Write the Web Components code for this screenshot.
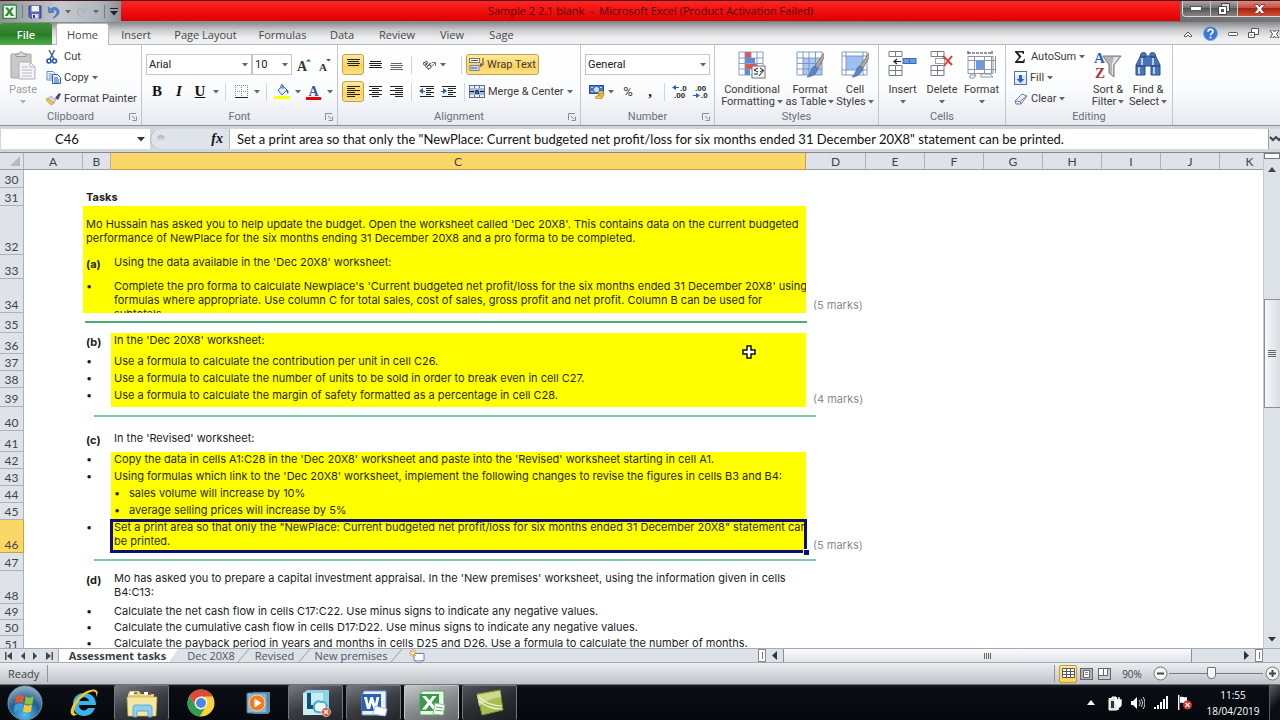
<!DOCTYPE html>
<html lang="en">
<head>
<meta charset="utf-8">
<title>Sample 2 2.1 blank - Microsoft Excel</title>
<style>
html, body { margin: 0; height: 100%; overflow: hidden; background: #fff; }
body { font-family: "Open Sans", "Noto Sans", sans-serif; font-size: 11px; color: #3b3b3b; }
</style>
</head>
<body>
<excel-window></excel-window>
<script>
const RESET = `
*, *::before, *::after { box-sizing: border-box; }
button { border: 0; background: none; padding: 0; margin: 0; font: inherit; color: inherit; display: flex; align-items: center; justify-content: center; white-space: nowrap; }
input, select { font: inherit; color: inherit; margin: 0; padding: 0; border: 0; border-radius: 0; background: none; outline: 0; min-width: 0; }
`;
function define(name, css, html) {
  const t = document.createElement('template');
  t.innerHTML = `<style>${RESET}${css}</style>${html}`;
  customElements.define(name, class extends HTMLElement {
    constructor() { super(); this.attachShadow({ mode: 'open' }).append(t.content.cloneNode(true)); }
  });
}

/* ---------- icons: name -> [width, height, svg body] ---------- */
const lines = (rows, c = '#222') => rows.map(([x1, x2, y]) => `<path d="M${x1} ${y}.5H${x2}" stroke="${c}"/>`).join('');
const brush = `<path d="M28 2 19 15l3 2 7-12z" fill="#b9a79b" stroke="#6d625c" stroke-width=".7"/><path d="M18 15l4 3c-2 5-6 8-11 8 4-3 3-7 7-11z" fill="#5b86c4" stroke="#3a5f98" stroke-width=".6"/>`;
const ICONS = {
  arrow: [6, 4, '<path d="M0 0H6L3 3.5z" fill="#666"/>'],
  darrow: [8, 5, '<path d="M0 0H8L4 4.5z" fill="#333"/>'],
  up: [8, 5, '<path d="M0 5H8L4 0z" fill="#444"/>'],
  left: [5, 9, '<path d="M5 0V9L0 4.5z" fill="#333"/>'],
  right: [5, 9, '<path d="M0 0V9L5 4.5z" fill="#333"/>'],
  first: [7, 8, '<path d="M7 0V8L2 4z" fill="#444"/><path d="M.8 0V8" stroke="#444" stroke-width="1.4"/>'],
  last: [7, 8, '<path d="M0 0V8L5 4z" fill="#444"/><path d="M6.2 0V8" stroke="#444" stroke-width="1.4"/>'],
  prev: [4, 8, '<path d="M4 0V8L0 4z" fill="#444"/>'],
  next: [4, 8, '<path d="M0 0V8L4 4z" fill="#444"/>'],
  launcher: [8, 8, '<path d="M.5 7V.5H7" fill="none" stroke="#8a9099"/><path d="M3 3l3 3M7.5 3.5v4h-4" fill="none" stroke="#8a9099"/>'],
  excel: [15, 15, '<rect x="1" y="1" width="13.500" height="13.500" rx="1" fill="#f4fbf2" stroke="#2f8a3c" stroke-width="1.600"/><path d="M3 3.500h3l1.500 2.500L9.200 3.500H12L9 7.500l3.200 4.500H9L7.400 9.300 5.600 12H2.600L6 7.600z" fill="#2b8c38"/>'],
  save: [14, 14, '<path d="M1 1h12v12H2.500L1 11.500z" fill="#5a68b8" stroke="#333f8a"/><rect x="3.500" y="1" width="7.500" height="5.500" fill="#eef2fb"/><rect x="4" y="9" width="6.500" height="4.500" fill="#d7dbea"/><rect x="5" y="10" width="2" height="3" fill="#333f8a"/>'],
  undo: [13, 14, '<path d="M1 2l1 6 5-1-2-1.500c3-2 6 .5 4.500 3.500-.7 1.500-2 2.500-3.500 4 4-1.500 6.500-4 6-7C11.300 2.500 7 1.500 3.500 4z" fill="#5f86d0" stroke="#3c62ad" stroke-width=".7"/>'],
  redo: [12, 14, '<path d="M11 2l-1 6-5-1 2-1.500c-3-2-5 .5-4 3.500.7 1.500 2 2.500 3.500 4C2.500 11.500 0 9 .8 6 1.500 2.500 5.500 1.500 8.500 4z" fill="#b2b6bc"/>'],
  qat: [8, 9, '<path d="M0 1.500H8" stroke="#222"/><path d="M0 4H8L4 8.500z" fill="#222"/>'],
  paste: [26, 29, '<rect x="1" y="3" width="20" height="24" rx="1" fill="#c9c9cc" stroke="#a3a3a8"/><path d="M6 5.500V3h3c0-3 4-3 4 0h3v2.500z" fill="#dcdcdf" stroke="#9a9a9f"/><path d="M9 11h11l5 5v12H9z" fill="#f4f4f6" stroke="#b0b0b5"/><path d="M20 11v5h5M12 16h6M12 19h10M12 22h10M12 25h10" fill="none" stroke="#bcbcc2"/>'],
  cut: [12, 14, '<path d="M3 0l5 9M8.500 0L4 9" stroke="#4b5f8c" stroke-width="1.500"/><circle cx="3" cy="11" r="2" fill="none" stroke="#2456b0" stroke-width="1.600"/><circle cx="8.500" cy="11" r="2" fill="none" stroke="#2456b0" stroke-width="1.600"/>'],
  copy: [15, 13, '<path d="M1 .5h6l2 2V9H1z" fill="#fff" stroke="#5b86c0"/><path d="M2.500 3h4M2.500 5h5M2.500 7h5" stroke="#5b86c0"/><path d="M6.500 3.500h5l3 3v6h-8z" fill="#e6effb" stroke="#2c61ae"/><path d="M8 7h4M8 9h5M8 11h5" stroke="#2c61ae"/>'],
  painter: [15, 13, '<path d="M9 6l4-5 2 1-3 6z" fill="#54417d"/><path d="M5 4l5 4-2 3-7-4z" fill="#d7d9de" stroke="#888" stroke-width=".6"/><path d="M1 6l7 5-2 2C3 12 .5 9 0 7z" fill="#f0c557" stroke="#b98e2c" stroke-width=".6"/>'],
  border: [13, 13, '<path d="M.5 0v12M6.500 0v12M12.500 0v12M0 .5h13M0 6.500h13" stroke="#888" stroke-dasharray="1 1"/><path d="M0 12.500h13" stroke="#222"/>'],
  fill: [16, 15, '<path d="M4 6l5-4 4 4-5 5z" fill="#dfe9f8" stroke="#3c66ab"/><path d="M7 4V1.500c0-1.500 2-1.500 2 0V5" fill="none" stroke="#3c66ab"/><path d="M12.500 5c2 1 2.500 3 1.500 5-1-1-2-2.500-1.500-5z" fill="#3c66ab"/><path d="M0 12h16v3H0z" fill="#ff0"/>'],
  fontcolor: [15, 16, '<text x="7.500" y="12" text-anchor="middle" font-family="Liberation Serif,serif" font-weight="bold" font-size="14" fill="#2f58a5">A</text><path d="M0 13h15v3H0z" fill="#e80000"/>'],
  bigA: [14, 14, '<text x="5" y="13" text-anchor="middle" font-family="Liberation Serif,serif" font-weight="bold" font-size="14" fill="#333">A</text><path d="M9 3.500h5L11.500 1z" fill="#2f58a5"/>'],
  smallA: [14, 14, '<text x="5" y="13" text-anchor="middle" font-family="Liberation Serif,serif" font-weight="bold" font-size="11" fill="#333">A</text><path d="M8 1h5l-2.500 2.500z" fill="#2f58a5"/>'],
  atop: [13, 13, lines([[0, 13, 1], [1, 12, 3], [0, 13, 5], [1, 12, 7]])],
  amid: [13, 13, lines([[1, 12, 3], [0, 13, 5], [1, 12, 7], [0, 13, 9]])],
  abot: [13, 13, lines([[1, 12, 5], [0, 13, 7], [1, 12, 9], [0, 13, 11]], '#666')],
  jleft: [13, 13, lines([[0, 13, 1], [0, 8, 3], [0, 13, 5], [0, 8, 7], [0, 13, 9], [0, 8, 11]])],
  jmid: [13, 13, lines([[0, 13, 1], [3, 10, 3], [0, 13, 5], [3, 10, 7], [0, 13, 9], [3, 10, 11]])],
  jright: [13, 13, lines([[0, 13, 1], [5, 13, 3], [0, 13, 5], [5, 13, 7], [0, 13, 9], [5, 13, 11]])],
  orient: [14, 13, '<text x="0" y="9" transform="rotate(45 4 6)" font-family="Liberation Sans,sans-serif" font-size="9" fill="#222">ab</text><path d="M5 12l7-7m-3-.5h3.500V8" fill="none" stroke="#777"/>'],
  outdent: [16, 13, lines([[1, 15, 1], [7, 15, 3], [7, 12, 5], [7, 15, 7], [7, 12, 9], [1, 15, 11]]) + '<path d="M4 3L0 6l4 3z" fill="#2b5fc0"/><path d="M3 6.500h3" stroke="#2b5fc0"/>'],
  indent: [16, 13, lines([[1, 15, 1], [7, 15, 3], [7, 12, 5], [7, 15, 7], [7, 12, 9], [1, 15, 11]]) + '<path d="M2 3l4 3-4 3z" fill="#2b5fc0"/><path d="M0 6.500h3" stroke="#2b5fc0"/>'],
  wrap: [15, 15, '<rect x=".5" y="1.500" width="10" height="4" fill="#fff" stroke="#777"/><rect x="1" y="8.500" width="9" height="5" fill="#cfdcf1" stroke="#6c86b5"/><path d="M2 3.500h7M2 11h6" stroke="#555"/><path d="M14 1v7h-3m1.500-2L11 8l1.500 2" fill="none" stroke="#444"/>'],
  merge: [16, 13, '<rect x=".5" y=".5" width="15" height="12" fill="#eef3fb" stroke="#5e6f91"/><path d="M5.500 0v3M10.500 0v3M5.500 10v3M10.500 10v3" stroke="#5e6f91"/><rect x="1" y="3" width="14" height="7" fill="#9ebbe8"/><text x="8" y="9" text-anchor="middle" font-family="Liberation Sans,sans-serif" font-weight="bold" font-size="8" fill="#111">a</text><path d="M1 6.500h4M11 6.500h4" stroke="#111"/>'],
  currency: [16, 14, '<rect x=".5" y=".5" width="14" height="8" fill="#4576bd" stroke="#2b5596"/><circle cx="7.500" cy="4.500" r="2.500" fill="#cfe0f7"/><path d="M2 2.500h2M2 6.500h2M11 2.500h2" stroke="#cfe0f7"/><ellipse cx="12" cy="7.500" rx="3" ry="1.500" fill="#f7cf63" stroke="#a87417" stroke-width=".7"/><ellipse cx="12" cy="10" rx="3" ry="1.500" fill="#f7cf63" stroke="#a87417" stroke-width=".7"/><ellipse cx="10" cy="12.300" rx="4" ry="1.500" fill="#f7cf63" stroke="#a87417" stroke-width=".7"/>'],
  decinc: [15, 13, '<text x="8" y="6" font-family="Liberation Sans,sans-serif" font-weight="bold" font-size="8" fill="#222">.0</text><text x="2" y="13" font-family="Liberation Sans,sans-serif" font-weight="bold" font-size="8" fill="#222">.00</text><path d="M4 0v5L0 2.500z" fill="#2b5fc0"/><path d="M3 2.500h4" stroke="#2b5fc0"/>'],
  decdec: [15, 13, '<text x="2" y="6" font-family="Liberation Sans,sans-serif" font-weight="bold" font-size="8" fill="#222">.00</text><text x="8" y="13" font-family="Liberation Sans,sans-serif" font-weight="bold" font-size="8" fill="#222">.0</text><path d="M3 8v5l4-2.500z" fill="#2b5fc0"/><path d="M0 10.500h4" stroke="#2b5fc0"/>'],
  cond: [28, 28, '<path d="M1 1h24v23H1z" fill="#fff"/><path d="M7 1h6v6H7zM7 13h12v5H7z" fill="#e5534b"/><path d="M7 7h10v5H7z" fill="#5b8bdc"/><path d="M7 18h5v6H7z" fill="#5b8bdc"/><path d="M1 1h24v23H1zM1 7h24M1 12.500h24M1 18h24M7 1v23M13 1v6M19 1v23" fill="none" stroke="#7f95bb" stroke-width=".9"/><rect x="14" y="15" width="13" height="12" fill="#f4f4f4" stroke="#777"/><path d="M20 17l-4 2 4 2M16 23h4M22 17l3 2-3 2M21 25l5-6" fill="none" stroke="#222"/>'],
  table: [28, 27, '<path d="M1 1h25v23H1z" fill="#fff"/><path d="M7 7h19v17H7z" fill="#a9c7f1"/><path d="M1 1h25v23H1zM1 7h25M1 12.500h25M1 18h25M7 1v23M13 1v23M19.500 1v23" fill="none" stroke="#7690bc" stroke-width=".9"/>' + brush],
  cellst: [28, 27, '<path d="M1 1h25v23H1z" fill="#fff"/><path d="M5 5h17v14H5z" fill="#9dc0f2"/><path d="M1 1h25v23H1zM1 5h25M1 19h25M5 1v23M22 1v23" fill="none" stroke="#7690bc" stroke-width=".9"/>' + brush],
  insert: [29, 25, '<path d="M1 .5h13v5H1zM7.500.5v5M1 14.500h13v10H1zM1 19.500h13M7.500 14.500v10" fill="#fff" stroke="#777d88"/><rect x="15" y="7.500" width="13" height="5" fill="#6d9ae4" stroke="#3d66b5"/><path d="M21.500 7.500v5" stroke="#3d66b5"/><path d="M6 10.500h7M9 8l-3 2.500L9 13" fill="none" stroke="#222" stroke-width="1.200"/>'],
  del: [24, 25, '<path d="M1 .5h13v5H1zM7.500.5v5M1 14.500h13v10H1zM1 19.500h13M7.500 14.500v10" fill="#fff" stroke="#777d88"/><path d="M5.500 7.500h9v5h-9z" fill="none" stroke="#444" stroke-dasharray="1 1"/><path d="M13 5l9 9M22 5l-8 10" stroke="#e03a30" stroke-width="2"/>'],
  format: [29, 28, '<path d="M1 0v4M25 0v4M1 2h24" stroke="#333" stroke-dasharray="3 1"/><path d="M1 5.500h25v17H1z" fill="#fff" stroke="#8a97ae"/><path d="M1 9.500h28M1 18.500h28M7.500 5v20M17.500 5v20M24.500 5v17M28.500 5v17" stroke="#8a97ae"/><path d="M9 10h8v8H9z" fill="#6d9ae4"/><path d="M3 24h6l-2 3H3zM14 23h9l3 3H14z" fill="#fff" stroke="#8a97ae"/>'],
  sum: [12, 14, '<path d="M1 1h9v3H9L8 2.500H4L7.500 6.500 3.500 11H9l1-2h1l-.7 4H1v-1l4-5-4-5z" fill="#222"/>'],
  filldn: [13, 14, '<rect x=".5" y=".5" width="12" height="13" fill="#dce7f8" stroke="#4a73b8"/><path d="M1 1h11v3H1z" fill="#fff"/><path d="M5 4h3v4h2.500l-4 4-4-4H5z" fill="#2d63c4"/>'],
  clear: [14, 12, '<path d="M1 8l7-7 5 2-6 8H2z" fill="#eef1f8" stroke="#6b7fa8"/><path d="M1 8l5 .5L12.500 3M6 8.500L7 11" fill="none" stroke="#6b7fa8"/>'],
  sort: [28, 28, '<path d="M9 5h18l-7 9v12l-5-4v-8z" fill="#b5b5b8" stroke="#7c7c80"/><path d="M20 6h5l-6 8v10l-1-1V13z" fill="#e6e6e8"/><text x="0" y="12" font-family="Liberation Serif,serif" font-weight="bold" font-size="15" fill="#3560b0">A</text><text x="1" y="27" font-family="Liberation Serif,serif" font-weight="bold" font-size="15" fill="#a93636">Z</text>'],
  find: [27, 26, '<path d="M6 3c0-2 5-2 5 0v2h4V3c0-2 5-2 5 0l1 3 4 8v10h-9v-9h-6v9H1V14l4-8z" fill="#4a74b8" stroke="#2d4f88"/><path d="M1 15h9M16 15h9M5 6h6M15 6h6" stroke="#1f3865"/><path d="M4 16v7M19 16v7M7 7v7M18 7v7" stroke="#b5cdf0" stroke-width="2"/>'],
  chev: [10, 8, '<path d="M1 6l4-4 4 4-2 1-2-2-2 2z" fill="#fff" stroke="#555"/>'],
  help: [15, 15, '<circle cx="7.500" cy="7.500" r="7" fill="#3c78d0" stroke="#7da6e0"/><path d="M5 5.800C5 2.600 10 2.600 10 5.600c0 1.700-2.500 1.800-2.500 3.700" fill="none" stroke="#fff" stroke-width="1.600"/><circle cx="7.500" cy="11.500" r="1" fill="#fff"/>'],
  wmin: [10, 4, '<rect x=".5" y=".5" width="9" height="3" rx="1" fill="#fff" stroke="#555"/>'],
  wrest: [11, 11, '<path d="M3.500.5h7v6h-7z" fill="#fff" stroke="#555"/><path d="M.5 4.500h6v5h-6z" fill="#fff" stroke="#555"/><path d="M2.500 6.500h2v1h-2z" fill="#555"/>'],
  wclose: [11, 8, '<path d="M1 0h3l1.500 2L7 0h3L7.500 4 10 8H7L5.500 6 4 8H1l2.500-4z" fill="#fff" stroke="#555"/>'],
  bmin: [12, 5, '<rect x=".5" y=".5" width="11" height="4" fill="#fff" stroke="#555"/>'],
  brest: [12, 12, '<path d="M3.500.5h8v8h-8z" fill="#ddd" stroke="#444"/><path d="M.5 3.500h8v8h-8z" fill="#fff" stroke="#444"/><path d="M3 6h3v3H3z" fill="#555"/>'],
  bclose: [13, 10, '<path d="M1 .5h4L6.500 3 8 .5h4L8.500 5 12 9.500H8L6.500 7 5 9.500H1L4.500 5z" fill="#fff" stroke="#844"/>'],
  expand: [12, 7, '<path d="M1 1l3 3 3-3 3 3 2-2" fill="none" stroke="#444" stroke-width="2"/>'],
  newtab: [16, 14, '<path d="M5 4.500h10v7H5z" fill="#fff" stroke="#6482b6"/><path d="M6 11.500l2 2h4l2-2" fill="#cddaf0" stroke="#6482b6"/><path d="M4 0v8M0 4h8M1 1l6 6M7 1L1 7" stroke="#e79b2d"/><circle cx="4" cy="4" r="1.500" fill="#fff3b0"/>'],
  vnorm: [13, 11, '<path d="M.5.500h12v9H.5zM.5 3.500h12M.5 6.500h12M4.500.500v9M8.500.500v9" fill="#fff" stroke="#555"/>'],
  vpage: [13, 12, '<rect x=".5" y=".5" width="12" height="11" fill="#b0b4ba" stroke="#666"/><path d="M3.500 2.500h6v7h-6z" fill="#fff" stroke="#666"/><path d="M5 4.500h3M5 6.500h3" stroke="#888"/>'],
  vbreak: [13, 12, '<rect x=".5" y=".5" width="12" height="11" fill="#c8cbd0" stroke="#666"/><path d="M1 1h4v6H1zM6 1h3v6H6z" fill="#fff"/><path d="M.5 7.500h9V.5M5.500.5v7" fill="none" stroke="#666"/>'],
  minus: [15, 15, '<circle cx="7.500" cy="7.500" r="6.500" fill="#f7f8f9" stroke="#777"/><path d="M4 7.500h7" stroke="#444" stroke-width="2"/>'],
  plus: [15, 15, '<circle cx="7.500" cy="7.500" r="6.500" fill="#f7f8f9" stroke="#777"/><path d="M4 7.500h7M7.500 4v7" stroke="#444" stroke-width="2"/>'],
  cross: [14, 14, '<path d="M5 1h4v4h4v4H9v4H5V9H1V5h4z" fill="#fff" stroke="#111" stroke-width="1.500"/>'],
  corner: [10, 10, '<path d="M10 0v10H0z" fill="#b4b8bf"/>'],
  start: [36, 36, '<defs><radialGradient id="o" cx=".5" cy=".85" r=".9"><stop offset="0" stop-color="#4fc3f0"/><stop offset=".5" stop-color="#1d5f96"/><stop offset="1" stop-color="#a9bfcc"/></radialGradient></defs><circle cx="18" cy="18" r="17" fill="url(#o)" stroke="#7d95a5"/><path d="M9 12c3-2 5-2 8-1l-1 7c-3-1-5-1-8 1z" fill="#e8562a"/><path d="M18.500 11.500c3 1.500 5 1.500 8 0l-1 7c-3 1.500-5 1-8 0z" fill="#8cc63e"/><path d="M8 20c3-2 5-2 8-1l-1 7c-3-1-5-1-8 1z" fill="#3fa0e0"/><path d="M17 19.500c3 1.500 5 1.500 8 0l-1 7c-3 1.500-5 1-8 0z" fill="#fcc92c"/>'],
  ie: [30, 30, '<path d="M27 17H10c0 6 7 7 9 3h7c-2 6-7 8-11 8C9 28 4 24 4 16 4 9 9 5 15 5c8 0 12 5 12 12zM10 13h10c-1-5-9-5-10 0z" fill="#3bb3ea"/><path d="M28 3c-3-4-14 0-20 8C2 18 0 25 3 27c2 2 6-1 6-1-5 1-5-4-1-10 5-8 14-14 18-12 2 1 1 4 1 5 2-3 2-5 1-6z" fill="#f5c62c"/>'],
  folder: [32, 29, '<path d="M2 5l2-3h9l2 3h13v21H2z" fill="#e9cf7a"/><path d="M4 3h4v3H4zM18 3h4v3h-4z" fill="#fff"/><path d="M8 3h3v2H8z" fill="#4c9f3a"/><path d="M22 4h3v2h-3z" fill="#c33"/><path d="M1 8h30l-1 19H2z" fill="#f6e6a3" stroke="#c9a94e" stroke-width=".7"/><path d="M7 28v-9c0-2 1-3 3-3h13c2 0 3 1 3 3v9h-4v-6H11v6z" fill="#8fd0f0" stroke="#4a9cc8" stroke-width=".8"/>'],
  chrome: [28, 28, '<circle cx="14" cy="14" r="13.500" fill="#fdd23a"/><path d="M2.300 7.200A13.500 13.500 0 0 1 25.800 7.500H14a6.500 6.500 0 0 0-6 9z" fill="#de4b3c"/><path d="M2.300 7.200A13.500 13.500 0 0 0 12.500 27.400L18 19a6.500 6.500 0 0 1-10-2.500z" fill="#2da057"/><circle cx="14" cy="14" r="6.200" fill="#fff"/><circle cx="14" cy="14" r="5" fill="#4a86ec"/>'],
  media: [26, 26, '<path d="M7 2h17v20l-2 2H7z" fill="#7fa9c8" opacity=".8"/><rect x="1" y="3" width="20" height="20" rx="1" fill="#86b5d6" stroke="#4c7c9e"/><circle cx="11" cy="13" r="8" fill="#ee7d1f" stroke="#fbd0a4"/><path d="M8.500 8.500v9l7-4.500z" fill="#fff"/>'],
  lync: [30, 30, '<path d="M2 5l4-3h22v21l-4 4H2z" fill="#8fd3e6"/><path d="M2 5h20v22H2z" fill="#c9edf5"/><path d="M6 5h4v12h7v4H6z" fill="#14527c"/><path d="M13 20c-1-5 4-8 7-6 4-1 7 3 5 6-1 4-5 5-8 4-3 0-4-2-4-4z" fill="#e8f8fc" stroke="#4badca" stroke-width="2"/><circle cx="25" cy="24" r="4.500" fill="#e5503c" stroke="#fff" stroke-width=".6"/><path d="M23 22l4 4M27 22l-4 4" stroke="#fff" stroke-width="1.300"/>'],
  word: [30, 28, '<path d="M5 2h22v24H3V6z" fill="#e8f1fc" stroke="#6d97d4"/><path d="M3 5h19v17H3z" fill="#2b62b8"/><path d="M5 8h3l1.500 7L11.500 8h2.500l2 7 1.500-7h3l-3 12h-3l-1.800-6-1.700 6h-3z" fill="#fff"/><path d="M16 17l12 3-2 7-12-2z" fill="#fff" stroke="#a8bcd8"/>'],
  xl: [30, 28, '<path d="M5 2h22v24H3V6z" fill="#ecf8ea" stroke="#4fa657"/><path d="M3 5h19v17H3z" fill="#3a9b46"/><path d="M5 7h4l3.500 4.500L15.500 7h4l-5 6.500 5.500 7h-4l-3.500-4.500L9 20.500H5l5.500-7z" fill="#fff"/><path d="M18 14l10 2-2 10-10-1z" fill="#fff" stroke="#8cba90"/><path d="M19 18l7 1M18.500 21l7 1" stroke="#5aa562"/>'],
  camtasia: [28, 28, '<path d="M1 5l23-4 3 20-21 5z" fill="#a9bd55" stroke="#7c8f35"/><path d="M1 6l23-4 1 6C17 9 9 12 3 17z" fill="#cdd98c"/><path d="M3 12c7 6 14 8 23 8M3 8c7 7 15 9 23 9" fill="none" stroke="#eef3cc" stroke-width="1.200"/>'],
  trayup: [8, 5, '<path d="M0 5H8L4 0z" fill="#fff"/>'],
  plug: [14, 16, '<path d="M1 3.500h3V2h4v1.500h1V15H1z" fill="#ddd" stroke="#fff"/><path d="M3 6h3v7H3z" fill="#333"/><path d="M6 5h7v4c0 2-1.500 3-3 3v3M8 2v4M11 2v4" fill="#fff" stroke="#fff" stroke-width="1.400"/>'],
  speaker: [14, 14, '<path d="M0 5h2l4-4v12L2 9H0z" fill="#fff"/><path d="M8 4c1.500 2 1.500 4 0 6M10 3c2 3 2 5 0 8M12 1c2.500 4 2.500 8 0 12" fill="none" stroke="#ddd"/>'],
  signal: [15, 13, '<path d="M0 11h2v2H0zM3 9h2v4H3zM6 6h2v7H6zM9 3h2v10H9zM12 0h2v13h-2z" fill="#fff"/>'],
  flag: [14, 15, '<path d="M.7 0v15" stroke="#fff" stroke-width="1.400"/><path d="M2 2c3-1 4 1 7 0v6c-3 1-4-1-7 0z" fill="#fff"/><circle cx="9.500" cy="10" r="4.500" fill="#d8362a"/><path d="M7.500 8l4 4M11.500 8l-4 4" stroke="#fff" stroke-width="1.300"/>']
};
customElements.define('x-icon', class extends HTMLElement {
  connectedCallback() {
    if (this.shadowRoot) return;
    const [w, h, body] = ICONS[this.getAttribute('name')];
    this.attachShadow({ mode: 'open' }).innerHTML =
      `<style>:host{display:inline-flex;flex:none}svg{display:block}</style><svg width="${w}" height="${h}" viewBox="0 0 ${w} ${h}" fill="none" aria-hidden="true">${body}</svg>`;
  }
});

/* ---------- title bar with quick access and window buttons ---------- */
define('title-bar', `
:host { display: flex; height: 22px; background: linear-gradient(90deg,#8b9095 0,#c6cace 60px,#aeb6bd 100px,#8d9296 120px,#6f6f6f 1180px,#777); border-top: 1px solid #4a1515; }
.qat { width: 121px; display: flex; align-items: center; gap: 5px; padding-left: 2px; }
.qat i { width: 1px; height: 13px; background: #777c82; }
h1 { flex: 1; margin: 0 0 1px; font-size: 11px; font-weight: 400; line-height: 20px; text-align: center; color: #560505; background: linear-gradient(#ff2626,#f01010 50%,#dc0000); white-space: pre; }
.win { display: flex; width: 98px; height: 16px; margin-left: 2px; border: 1px solid #d8d8d8; border-width: 0 0 1px 1px; border-radius: 0 0 0 4px; overflow: hidden; }
.win button { flex: 28; background: linear-gradient(#a8a8a8,#6d6d6d 50%,#555 50%,#858585); border-right: 1px solid #ccc; }
.win .x { flex: 44; border: 0; background: linear-gradient(#d88c80,#c04a3a 50%,#a82010 50%,#d05038); }
`, `<div class="qat"><x-icon name="excel"></x-icon><i></i><button aria-label="Save"><x-icon name="save"></x-icon></button><button aria-label="Undo"><x-icon name="undo"></x-icon></button><x-icon name="arrow"></x-icon><button aria-label="Redo"><x-icon name="redo"></x-icon></button><x-icon name="arrow"></x-icon><i></i><x-icon name="qat"></x-icon></div>
<h1>Sample 2 2.1 blank  -  Microsoft Excel (Product Activation Failed)</h1>
<div class="win"><button aria-label="Minimise"><x-icon name="bmin"></x-icon></button><button aria-label="Restore"><x-icon name="brest"></x-icon></button><button class="x" aria-label="Close"><x-icon name="bclose"></x-icon></button></div>`);

define('ribbon-tabs', `
:host { display: flex; height: 23px; padding-top: 1px; background: linear-gradient(#85888b,#c9cbce 8px,#eceeef 16px,#f0f1f2); border-bottom: 1px solid #b6babf; }
nav { display: flex; flex: 1; }
button { width: var(--w); height: 22px; font-size: 11px; color: #484848; }
.file { background: linear-gradient(#3f8f3b,#2c7f2a 50%,#1f7a22 50%,#55ab49); color: #fff; font-weight: 600; border-radius: 3px 3px 0 0; margin-right: 4px; }
.on { background: #fff; border: 1px solid #b6babf; border-bottom: 0; border-radius: 3px 3px 0 0; }
.tools { display: flex; align-items: center; gap: 10px; }
`, `<nav>
<button class="file" style="--w:52px">File</button><button class="on" style="--w:53px">Home</button><button style="--w:54px">Insert</button><button style="--w:85px">Page Layout</button><button style="--w:69px">Formulas</button><button style="--w:50px">Data</button><button style="--w:60px">Review</button><button style="--w:50px">View</button><button style="--w:49px">Sage</button></nav>
<div class="tools"><x-icon name="chev"></x-icon><x-icon name="help"></x-icon><x-icon name="wmin"></x-icon><x-icon name="wrest"></x-icon><x-icon name="wclose"></x-icon></div>`);

/* ---------- ribbon ---------- */
define('ribbon-group', `
:host { display: grid; grid-template: minmax(0, 1fr) 15px / minmax(0, 1fr); width: var(--w); flex: none; border-right: 1px solid #c3c7cd; padding-bottom: 1px; }
.body { display: flex; padding: 1px 4px 0; }
footer { display: grid; grid-template-columns: 16px 1fr 16px; align-items: center; justify-items: center; line-height: 14px; color: #6a7078; }
footer span { grid-column: 2; }
:host([plain]) x-icon { display: none; }
`, `<div class="body"><slot></slot></div><footer><span><slot name="label"></slot></span><x-icon name="launcher"></x-icon></footer>`);

customElements.define('big-button', class extends HTMLElement {
  connectedCallback() {
    if (this.shadowRoot) return;
    const a = n => this.getAttribute(n);
    const two = a('line2');
    this.attachShadow({ mode: 'open' }).innerHTML = `<style>${RESET}
:host { display: block; width: var(--w); flex: none; }
button { width: 100%; flex-direction: column; justify-content: flex-start; line-height: 12px; padding-top: 5px; }
.pic { height: 33px; display: flex; align-items: flex-start; }
.l2 { display: flex; align-items: center; gap: 2px; height: 12px; }
:host([dim]) { color: #9a9da2; } :host([dim]) .l2 { opacity: .5; }
</style><button><span class="pic"><x-icon name="${a('icon')}"></x-icon></span><span>${a('line1')}</span><span class="l2">${two ? `<span>${two}</span>` : ''}<x-icon name="arrow"></x-icon></span></button>`;
  }
});
customElements.define('tool-button', class extends HTMLElement {
  connectedCallback() {
    if (this.shadowRoot) return;
    this.attachShadow({ mode: 'open' }).innerHTML = `<style>${RESET}
:host { display: block; width: var(--w, auto); height: 21px; flex: none; }
button { width: 100%; height: 100%; gap: 3px; line-height: 14px; }
:host([text]) button { justify-content: flex-start; }
:host([on]) button { background: linear-gradient(#fde9a0,#fbd35c 60%,#fce287); border: 1px solid #c2a14d; border-radius: 3px; }
</style><button aria-label="${this.getAttribute('title') || ''}"><slot></slot></button>`;
    if (!this.getAttribute('title')) this.shadowRoot.querySelector('button').removeAttribute('aria-label');
  }
});
customElements.define('combo-box', class extends HTMLElement {
  connectedCallback() {
    if (this.shadowRoot) return;
    const a = n => this.getAttribute(n);
    this.attachShadow({ mode: 'open' }).innerHTML = `<style>${RESET}
:host { display: grid; align-items: center; width: var(--w); height: 21px; flex: none; background: #fff; border: 1px solid #c3c7cd; }
select { grid-area: 1/1; appearance: none; width: 100%; padding: 0 2px; line-height: 18px; color: #222; }
x-icon { grid-area: 1/1; justify-self: end; margin-right: 3px; pointer-events: none; }
</style><select aria-label="${a('title')}"><option>${a('value')}</option></select><x-icon name="arrow"></x-icon>`;
  }
});

define('ribbon-bar', `
:host { display: flex; height: 81px; background: linear-gradient(#fff,#fbfcfd 45px,#eef0f4 66px,#e6e9ee); border-bottom: 1px solid #8b9097; overflow: hidden; font-family: Roboto, "Open Sans", sans-serif; }
.col { display: flex; flex-direction: column; }
.list { padding-left: 4px; }
.rows { gap: 6px; padding-top: 8px; }
.row { display: flex; align-items: center; }
.sep { width: 1px; height: 18px; background: #d0d3d8; margin: 0 var(--m, 4px) 0 var(--m, 4px); flex: none; }
.ser { font: 700 15px "Liberation Serif", serif; color: #111; }
.it { font-style: italic; } .un { text-decoration: underline; }
`, `
<ribbon-group style="--w:142px"><span slot="label">Clipboard</span>
 <big-button dim icon="paste" line1="Paste" style="--w:38px"></big-button>
 <div class="col list">
  <tool-button text><x-icon name="cut"></x-icon><span style="margin-left:3px">Cut</span></tool-button>
  <tool-button text><x-icon name="copy"></x-icon>Copy <x-icon name="arrow"></x-icon></tool-button>
  <tool-button text><x-icon name="painter"></x-icon>Format Painter</tool-button>
 </div>
</ribbon-group>
<ribbon-group style="--w:196px"><span slot="label">Font</span>
 <div class="col rows">
  <div class="row"><combo-box title="Font" value="Arial" style="--w:106px"></combo-box><combo-box title="Font size" value="10" style="--w:40px"></combo-box><tool-button title="Grow font" style="--w:23px"><x-icon name="bigA"></x-icon></tool-button><tool-button title="Shrink font" style="--w:20px"><x-icon name="smallA"></x-icon></tool-button></div>
  <div class="row"><tool-button style="--w:22px"><span class="ser">B</span></tool-button><tool-button style="--w:22px"><span class="ser it">I</span></tool-button><tool-button style="--w:20px"><span class="ser un">U</span></tool-button><tool-button title="Underline options" style="--w:11px"><x-icon name="arrow"></x-icon></tool-button><i class="sep"></i><tool-button title="Borders" style="--w:22px"><x-icon name="border"></x-icon></tool-button><tool-button title="Border options" style="--w:10px"><x-icon name="arrow"></x-icon></tool-button><i class="sep"></i><tool-button title="Fill colour" style="--w:22px"><x-icon name="fill"></x-icon></tool-button><tool-button title="Fill options" style="--w:9px"><x-icon name="arrow"></x-icon></tool-button><tool-button title="Font colour" style="--w:23px"><x-icon name="fontcolor"></x-icon></tool-button><tool-button title="Colour options" style="--w:9px"><x-icon name="arrow"></x-icon></tool-button></div>
 </div>
</ribbon-group>
<ribbon-group style="--w:243px"><span slot="label">Alignment</span>
 <div class="col rows">
  <div class="row"><tool-button on title="Top align" style="--w:22px"><x-icon name="atop"></x-icon></tool-button><tool-button title="Middle align" style="--w:22px"><x-icon name="amid"></x-icon></tool-button><tool-button title="Bottom align" style="--w:21px"><x-icon name="abot"></x-icon></tool-button><i class="sep"></i><tool-button title="Orientation" style="--w:36px"><x-icon name="orient"></x-icon><x-icon name="arrow"></x-icon></tool-button><i class="sep" style="margin-left:9px"></i><tool-button on style="--w:73px"><x-icon name="wrap"></x-icon>Wrap Text</tool-button></div>
  <div class="row"><tool-button on title="Align left" style="--w:22px"><x-icon name="jleft"></x-icon></tool-button><tool-button title="Centre" style="--w:22px"><x-icon name="jmid"></x-icon></tool-button><tool-button title="Align right" style="--w:21px"><x-icon name="jright"></x-icon></tool-button><i class="sep"></i><tool-button title="Decrease indent" style="--w:22px"><x-icon name="outdent"></x-icon></tool-button><tool-button title="Increase indent" style="--w:22px"><x-icon name="indent"></x-icon></tool-button><i class="sep"></i><tool-button text style="--w:106px"><x-icon name="merge"></x-icon>Merge &amp; Center <x-icon name="arrow"></x-icon></tool-button></div>
 </div>
</ribbon-group>
<ribbon-group style="--w:134px"><span slot="label">Number</span>
 <div class="col rows">
  <div class="row"><combo-box title="Number format" value="General" style="--w:125px"></combo-box></div>
  <div class="row"><tool-button title="Accounting" style="--w:32px"><x-icon name="currency"></x-icon><x-icon name="arrow"></x-icon></tool-button><tool-button style="--w:22px"><span style="font-size:13px">%</span></tool-button><tool-button style="--w:22px"><span class="ser">,</span></tool-button><i class="sep" style="--m:3px"></i><tool-button title="Increase decimal" style="--w:22px"><x-icon name="decinc"></x-icon></tool-button><tool-button title="Decrease decimal" style="--w:20px"><x-icon name="decdec"></x-icon></tool-button></div>
 </div>
</ribbon-group>
<ribbon-group plain style="--w:164px"><span slot="label">Styles</span>
 <big-button icon="cond" line1="Conditional" line2="Formatting" style="--w:66px"></big-button><big-button icon="table" line1="Format" line2="as Table" style="--w:50px"></big-button><big-button icon="cellst" line1="Cell" line2="Styles" style="--w:40px"></big-button>
</ribbon-group>
<ribbon-group plain style="--w:127px"><span slot="label">Cells</span>
 <big-button icon="insert" line1="Insert" style="--w:39px"></big-button><big-button icon="del" line1="Delete" style="--w:40px"></big-button><big-button icon="format" line1="Format" style="--w:39px"></big-button>
</ribbon-group>
<ribbon-group plain style="--w:167px"><span slot="label">Editing</span>
 <div class="col list" style="width:78px">
  <tool-button text><x-icon name="sum"></x-icon><span style="margin-left:2px">AutoSum</span> <x-icon name="arrow"></x-icon></tool-button>
  <tool-button text><x-icon name="filldn"></x-icon>Fill <x-icon name="arrow"></x-icon></tool-button>
  <tool-button text><x-icon name="clear"></x-icon>Clear <x-icon name="arrow"></x-icon></tool-button>
 </div>
 <big-button icon="sort" line1="Sort &amp;amp;" line2="Filter" style="--w:40px"></big-button><big-button icon="find" line1="Find &amp;amp;" line2="Select" style="--w:40px"></big-button>
</ribbon-group>`);

define('formula-bar', `
:host { display: flex; height: 27px; padding: 3px 0 3px 1px; background: #d3d6dd; border-bottom: 1px solid #85898f; font: 13px Lato, Carlito, sans-serif; color: #111; }
.name { width: 149px; display: grid; align-items: center; background: #fff; }
.name input { grid-area: 1/1; width: 132px; text-align: center; }
.name x-icon { grid-area: 1/1; justify-self: end; margin-right: 5px; }
.fx { width: 80px; display: flex; align-items: center; justify-content: space-between; padding: 0 6px; background: #dfe3ea; border: 1px solid #b4b8bf; border-width: 0 1px 0 1px; border-radius: 10px 0 0 10px; font: italic 700 14px "Liberation Serif", serif; }
.fx i { width: 8px; height: 8px; border-radius: 4px; background: linear-gradient(#aeb2b8,#eee); }
.f { flex: 1; padding: 0 7px; background: #fff; }
.ex { width: 12px; background: #dfe3ea; border-left: 1px solid #9a9ea5; }
`, `<div class="name"><input aria-label="Name Box" value="C46"><x-icon name="darrow"></x-icon></div><div class="fx"><i></i><span>fx</span></div>
<input class="f" aria-label="Formula" value='Set a print area so that only the "NewPlace: Current budgeted net profit/loss for six months ended 31 December 20X8" statement can be printed.'><button class="ex" aria-label="Expand"><x-icon name="expand"></x-icon></button>`);

/* ---------- worksheet ---------- */
const ROWS = [
  [30, 18], [31, 18, { b: '<b>Tasks</b>', mid: 1 }],
  [32, 49, { bc: 'Mo Hussain has asked you to help update the budget. Open the worksheet called \'Dec 20X8\'. This contains data on the current budgeted<br>performance of NewPlace for the six months ending 31 December 20X8 and a pro forma to be completed.' }],
  [33, 24, { b: '(a)', yb: 1, y: 1, c: "Using the data available in the 'Dec 20X8' worksheet:" }],
  [34, 34, { b: '•', yb: 1, y: 1, c: "<div class='clip'>Complete the pro forma to calculate Newplace's 'Current budgeted net profit/loss for the six months ended 31 December 20X8' using<br>formulas where appropriate. Use column C for total sales, cost of sales, gross profit and net profit. Column B can be used for<br>subtotals.</div>", d: '(5 marks)' }],
  [35, 20, { line: 'one' }],
  [36, 21, { b: '(b)', y: 1, c: "In the 'Dec 20X8' worksheet:" }],
  [37, 17, { b: '•', y: 1, c: 'Use a formula to calculate the contribution per unit in cell C26.' }],
  [38, 17, { b: '•', y: 1, c: 'Use a formula to calculate the number of units to be sold in order to break even in cell C27.' }],
  [39, 19, { b: '•', y: 1, c: 'Use a formula to calculate the margin of safety formatted as a percentage in cell C28.', d: '(4 marks)' }],
  [40, 24, { line: 'two' }],
  [41, 21, { b: '(c)', c: "In the 'Revised' worksheet:" }],
  [42, 17, { b: '•', y: 1, c: "Copy the data in cells A1:C28 in the 'Dec 20X8' worksheet and paste into the 'Revised' worksheet starting in cell A1." }],
  [43, 17, { b: '•', y: 1, c: "Using formulas which link to the 'Dec 20X8' worksheet, implement the following changes to revise the figures in cells B3 and B4:" }],
  [44, 17, { y: 1, c: '<span class="sub">•</span>sales volume will increase by 10%' }],
  [45, 17, { y: 1, c: '<span class="sub">•</span>average selling prices will increase by 5%' }],
  [46, 33, { b: '•', y: 1, sel: 1, c: 'Set a print area so that only the "NewPlace: Current budgeted net profit/loss for six months ended 31 December 20X8" statement can<br>be printed.', d: '(5 marks)' }],
  [47, 18, { line: 'two three' }],
  [48, 33, { b: '(d)', c: "Mo has asked you to prepare a capital investment appraisal. In the 'New premises' worksheet, using the information given in cells<br>B4:C13:" }],
  [49, 16, { b: '•', c: 'Calculate the net cash flow in cells C17:C22. Use minus signs to indicate any negative values.' }],
  [50, 16, { b: '•', c: 'Calculate the cumulative cash flow in cells D17:D22. Use minus signs to indicate any negative values.' }],
  [51, 17, { b: '•', c: 'Calculate the payback period in years and months in cells D25 and D26. Use a formula to calculate the number of months.' }]
];
const rowHTML = ([n, h, r = {}]) => {
  const label = r.b && r.b[0] === '(' ? 'label' : '';
  const b = r.bc ? `<td class="y vm" colspan="2">${r.bc}</td>`
    : `<td class="${r.yb ? 'y ' : ''}${label}${r.mid ? 'vm' : ''}">${r.line ? `<hr class="${r.line}">` : ''}${r.b || ''}</td><td class="${r.y ? 'y' : ''}${r.sel ? ' sel' : ''}">${r.c || ''}</td>`;
  return `<tr style="height:${h}px"><th scope="row" class="${r.sel ? 'hot' : ''}">${n}</th><td></td>${b}<td class="mark">${r.d || ''}</td><td colspan="7"></td></tr>`;
};
define('sheet-grid', `
:host { display: flex; flex: 1; min-height: 0; overflow: hidden; background: #fff; }
.view { flex: 1; min-width: 0; overflow: hidden; position: relative; }
table { table-layout: fixed; width: 1280px; border-collapse: separate; border-spacing: 0; font: 11px/14px Inter, "Liberation Sans", Arial, sans-serif; color: #1c1c1c; }
th { font: 12px/15px Lato, Carlito, sans-serif; color: #3f444b; background: #dfe2e9; border: 0 solid #adb1b8; border-width: 0 1px 1px 0; padding: 0; text-align: center; vertical-align: bottom; }
thead th { height: 17px; vertical-align: middle; border-bottom-color: #9a9ea5; }
thead x-icon { display: flex; justify-content: flex-end; padding: 0 3px 0 0; }
th.hot { background: #fbd767; border-color: #c9a043; }
td { padding: 0 0 0 3px; vertical-align: top; white-space: nowrap; position: relative; }
.y { background: #ff0; color: #2a2a05; }
.vm { vertical-align: middle; }
.label { font-weight: 700; padding-top: 2px; }
.mark { vertical-align: bottom; padding: 0 0 1px 7px; color: #8b8b8b; }
.clip { height: 34px; overflow: hidden; }
.sub { display: inline-block; width: 15px; }
hr { position: absolute; z-index: 1; margin: 0; border: 0; width: 722px; height: 2px; }
.one { left: 2px; top: 8px; background: #4dab76; }
.two { left: 11px; top: 8px; background: #7fcba6; }
.three { top: 6px; }
.sel::before { content: ""; position: absolute; inset: -1px -1px 0 -1px; border: 3px solid #0e0e7a; }
.sel::after { content: ""; position: absolute; right: -3px; bottom: -2px; width: 6px; height: 6px; background: #0e0e7a; border: 1px solid #fff; border-width: 1px 0 0 1px; }
.cursor { position: absolute; left: 742px; top: 192px; }
.vs { width: 17px; display: flex; flex-direction: column; align-items: center; background: #dde1e8; border-left: 1px solid #c3c7cd; }
.split { width: 16px; height: 6px; margin-bottom: 8px; background: #fff; border: 1px solid #777; }
.gap1 { height: 127px; }
.thumb { width: 17px; height: 109px; display: flex; flex-direction: column; align-items: center; justify-content: center; gap: 1px; background: linear-gradient(90deg,#f7f8fa,#d9dde4); border: 1px solid #8b9097; }
.thumb i { width: 8px; height: 1px; background: #666; }
.fillup { flex: 1; }
.down { margin-bottom: 6px; }
`, `<div class="view"><table><colgroup><col style="width:24px"><col style="width:59px"><col style="width:28px"><col style="width:695px"><col style="width:60px">${'<col style="width:59px">'.repeat(6)}<col></colgroup>
<thead><tr><th><x-icon name="corner"></x-icon></th>${'ABCDEFGHIJK'.split('').map(c => `<th scope="col"${c === 'C' ? ' class="hot"' : ''}>${c}</th>`).join('')}</tr></thead><tbody>${ROWS.map(rowHTML).join('')}</tbody></table><x-icon class="cursor" name="cross"></x-icon></div>
<div class="vs"><div class="split"></div><x-icon name="up"></x-icon><div class="gap1"></div><div class="thumb"><i></i><i></i><i></i><i></i></div><div class="fillup"></div><x-icon class="down" name="darrow"></x-icon></div>`);

define('sheet-tabs', `
:host { display: flex; height: 15px; background: #dde1e8; border-top: 1px solid #a5a9b0; border-bottom: 1px solid #a5a9b0; }
.left { flex: 758; display: flex; min-width: 0; }
.nav { width: 59px; display: flex; align-items: center; justify-content: space-between; padding: 0 5px; border-right: 1px solid #a5a9b0; }
.tab { position: relative; width: var(--w); font-size: 11px; line-height: 13px; color: #50555c; height: 13px; }
.tab::after { content: ""; position: absolute; right: 0; top: 0; width: 1px; height: 13px; background: #9a9ea5; transform: skewX(-40deg); }
.tab.on { background: #fff; font-weight: 700; color: #3c4046; clip-path: polygon(0 0,100% 0,calc(100% - 9px) 100%,0 100%); padding-right: 2px; }
.new { margin-left: 12px; }
.hs { flex: 505; display: flex; align-items: center; }
.box { width: 8px; height: 13px; border: 1px solid #888; background: #fff; display: grid; place-items: center; }
.box i { width: 1px; height: 7px; background: #777; }
.hs > x-icon { margin: 0 6px; }
.thumb { flex: 411; height: 13px; display: flex; align-items: center; justify-content: center; gap: 1px; background: linear-gradient(#fafbfc,#dfe3ea); border: 1px solid #8b9097; border-width: 0 1px; }
.thumb i { width: 1px; height: 6px; background: #666; }
.track { flex: 46; }
.pad { width: 17px; }
`, `<div class="left"><div class="nav"><x-icon name="first"></x-icon><x-icon name="prev"></x-icon><x-icon name="next"></x-icon><x-icon name="last"></x-icon></div>
<button class="tab on" style="--w:119px">Assessment tasks</button><button class="tab" style="--w:66px">Dec 20X8</button><button class="tab" style="--w:61px">Revised</button><button class="tab" style="--w:92px">New premises</button><x-icon class="new" name="newtab"></x-icon></div>
<div class="hs"><span class="box"><i></i></span><x-icon name="left"></x-icon><div class="thumb"><i></i><i></i><i></i><i></i></div><div class="track"></div><x-icon name="right"></x-icon><span class="box"><i></i></span></div><div class="pad"></div>`);

define('status-bar', `
:host { display: flex; align-items: center; height: 22px; padding: 0 1px 0 8px; background: linear-gradient(#eceef1,#d5d8dd 50%,#bfc3c9); border-bottom: 1px solid #6f7378; color: #3f3f3f; }
.ready { flex: 1; display: flex; gap: 8px; align-items: center; }
.ready i, .sep { width: 1px; height: 17px; background: #8f949a; }
.sep { margin-right: 4px; }
button { width: 18px; height: 18px; }
.on { background: linear-gradient(#fde9a0,#fbd35c); border: 1px solid #c59a32; border-radius: 2px; }
output { width: 38px; text-align: center; font-size: 10px; }
input { width: 94px; height: 16px; appearance: none; }
input::-webkit-slider-runnable-track { height: 1px; background: #777c82; }
input::-webkit-slider-thumb { appearance: none; width: 9px; height: 12px; margin-top: -6px; background: #f7f8f9; border: 1px solid #6f7378; border-radius: 1px 1px 4px 4px; }
.in { margin-right: -2px; }
`, `<div class="ready"><span>Ready</span><i></i></div><i class="sep"></i><button class="on" aria-label="Normal"><x-icon name="vnorm"></x-icon></button><button aria-label="Page layout"><x-icon name="vpage"></x-icon></button><button aria-label="Page break preview"><x-icon name="vbreak"></x-icon></button><output>90%</output><button aria-label="Zoom out"><x-icon name="minus"></x-icon></button><input type="range" min="0" max="100" value="45" aria-label="Zoom"><button class="in" aria-label="Zoom in"><x-icon name="plus"></x-icon></button>`);

define('task-bar', `
:host { display: flex; align-items: stretch; height: 35px; background: linear-gradient(#1b1e23,#0a0e14 3px,#05080d); color: #fff; }
.apps { display: flex; flex: 1; }
.apps button { width: 58px; overflow: hidden; }
.apps .start { width: 50px; }
.apps .run { width: 55px; margin-right: 3px; border: 1px solid #74777b; border-bottom: 0; border-radius: 2px; background: linear-gradient(160deg,#777b80,#3a3d42 50%,#22252a); }
.apps .ie { width: 64px; padding-left: 4px; }
.apps .act { background: linear-gradient(160deg,#c6c8ca,#8a8d90 50%,#65686b); border-color: #c4c6c8; }
.apps .last { background: linear-gradient(160deg,#4f5358,#2b2e33 50%,#191c20); }
.tray { display: flex; align-items: center; gap: 9px; }
.tray x-icon:first-child { margin-right: 4px; }
.clock { width: 64px; text-align: center; font-size: 10px; line-height: 16px; margin: 0 4px 0 0; }
.desk { width: 11px; background: linear-gradient(135deg,#5a5f64,#0a0e14 60%); border-left: 1px solid #55595e; }
`, `<div class="apps"><button class="start" aria-label="Start"><x-icon name="start"></x-icon></button><button class="ie" aria-label="Internet Explorer"><x-icon name="ie"></x-icon></button><button class="run" aria-label="Explorer"><x-icon name="folder"></x-icon></button><button aria-label="Chrome"><x-icon name="chrome"></x-icon></button><button aria-label="Media Player"><x-icon name="media"></x-icon></button><button class="run" aria-label="Lync"><x-icon name="lync"></x-icon></button><button class="run" aria-label="Word"><x-icon name="word"></x-icon></button><button class="run act" aria-label="Excel"><x-icon name="xl"></x-icon></button><button class="run last" aria-label="Camtasia"><x-icon name="camtasia"></x-icon></button></div>
<div class="tray"><x-icon name="trayup"></x-icon><x-icon name="plug"></x-icon><x-icon name="speaker"></x-icon><x-icon name="signal"></x-icon><x-icon name="flag"></x-icon><div class="clock"><div>11:55</div><div>18/04/2019</div></div></div><div class="desk"></div>`);

define('excel-window', `:host { display: flex; flex-direction: column; height: 100vh; min-width: 0; }`,
`<title-bar></title-bar><ribbon-tabs></ribbon-tabs><ribbon-bar></ribbon-bar><formula-bar></formula-bar><sheet-grid></sheet-grid><sheet-tabs></sheet-tabs><status-bar></status-bar><task-bar></task-bar>`);
</script>
</body>
</html>
